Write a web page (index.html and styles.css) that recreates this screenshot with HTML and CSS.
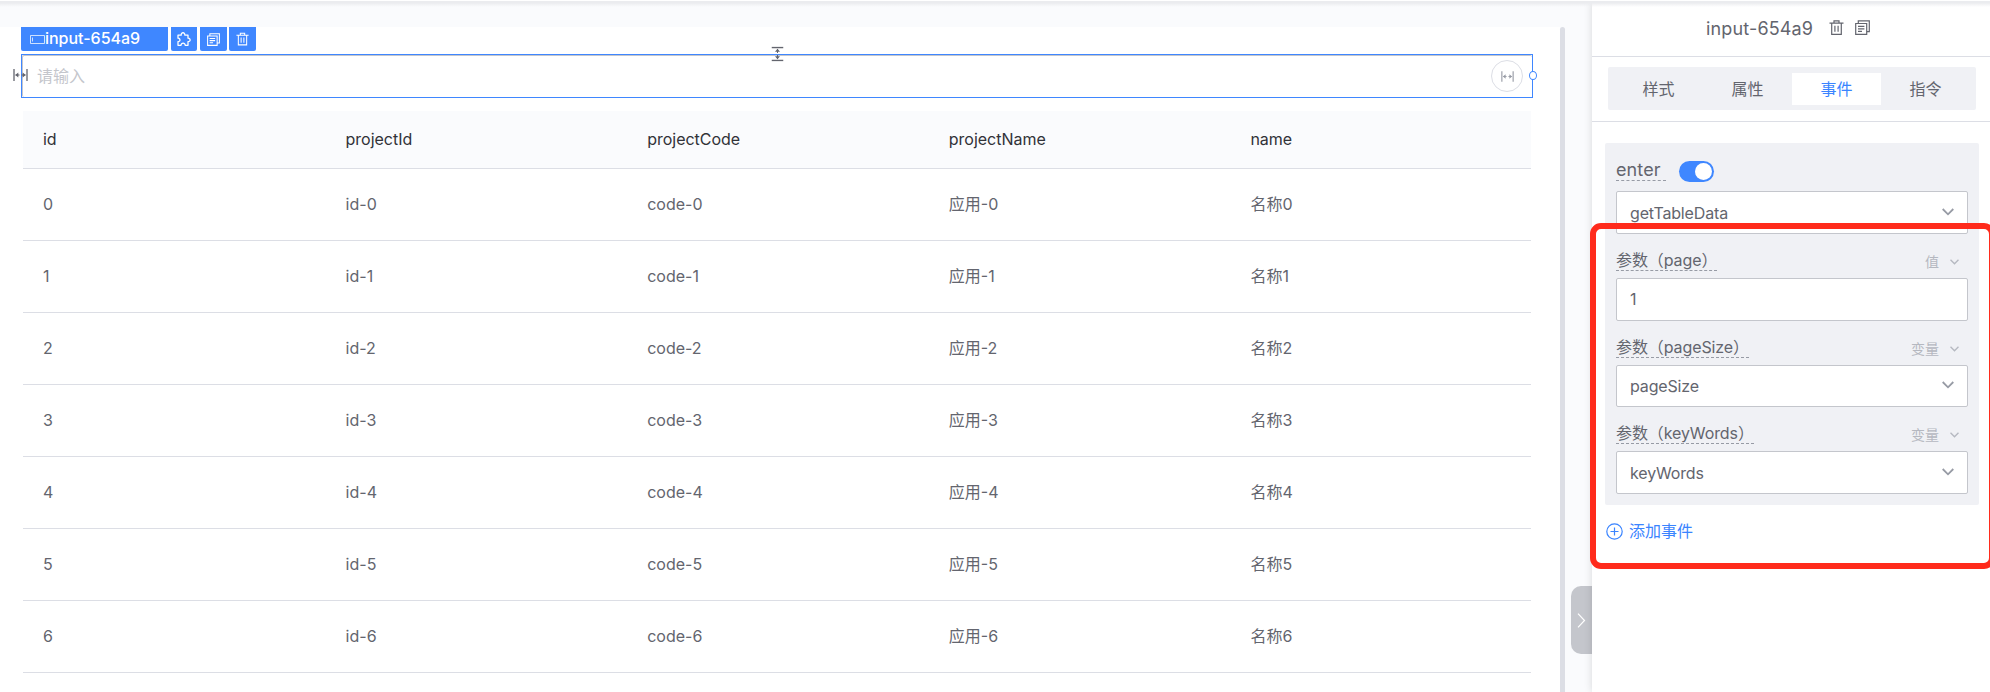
FILE: index.html
```html
<!DOCTYPE html>
<html lang="zh-CN">
<head>
<meta charset="utf-8">
<title>input-654a9</title>
<link rel="stylesheet" href="styles.css">
</head>
<body>
<svg class="defs" width="0" height="0">
  <symbol id="trash" viewBox="0 0 15 15"><path d="M.5 3.2h14M5 3V.9h5V3M2.700 3.400v10.900h9.600V3.400M5.900 5.700v6M9.100 5.700v6" fill="none" stroke="currentColor" stroke-width="1.200"/></symbol>
  <symbol id="copy" viewBox="0 0 15 15"><path d="M.7 3.500h11v10.800h-11zM3.300 3.300V.8h11v10.800h-2.400M3 6.300h6.400M3 8.800h6.400M3 11.300h4" fill="none" stroke="currentColor" stroke-width="1.200"/></symbol>
  <symbol id="puzzle" viewBox="0 0 14 14"><path d="M1 3.200h3.200c-.4-3.300 4-3.300 3.600 0h3.200v3c2.800-.2 2.800 3.600 0 3.400v3.700H8.200c.1-2.900-4.300-2.900-4.200 0H1V9.600c2.600.2 2.600-3.600 0-3.400z" fill="none" stroke="currentColor" stroke-width="1.300" stroke-linejoin="round"/></symbol>
  <symbol id="stretch" viewBox="0 0 15 12"><path d="M1 0v12M14 0v12" fill="none" stroke="currentColor" stroke-width="1.300"/><path d="M2.500 6h4M8.500 6h4" stroke="currentColor"/><path d="M2.300 6l3-2.500v5zM12.700 6l-3-2.500v5z" fill="currentColor"/></symbol>
  <symbol id="down" viewBox="0 0 12 8"><path d="M.7 1l5.300 5.300L11.300 1" fill="none" stroke="currentColor" stroke-width="1.800"/></symbol>
</svg>
<div class="app">
  <main class="stage">
    <div class="canvas">
      <div class="badges">
        <span class="badge badge-name"><svg width="15" height="9" viewBox="0 0 15 9"><path d="M.5.5h14v8H.5zM2.500 2.500v4" fill="none" stroke="currentColor" opacity=".75"/></svg>input-654a9</span>
        <span class="badge badge-puzzle"><svg width="14" height="14"><use href="#puzzle"/></svg></span>
        <span class="badge badge-copy"><svg width="13" height="13"><use href="#copy"/></svg></span>
        <span class="badge badge-trash"><svg width="13" height="14"><use href="#trash"/></svg></span>
      </div>
      <div class="selection">
        <div class="field">请输入</div>
        <svg class="grip-left" width="15" height="12"><use href="#stretch"/></svg>
        <svg class="grip-top" width="15" height="12"><use href="#stretch"/></svg>
        <span class="round"><svg width="13" height="11"><use href="#stretch"/></svg></span>
        <span class="handle"></span>
      </div>
      <div class="table">
        <div class="row head"><span>id</span><span>projectId</span><span>projectCode</span><span>projectName</span><span>name</span></div>
        <div class="row"><span>0</span><span>id-0</span><span>code-0</span><span>应用-0</span><span>名称0</span></div>
        <div class="row"><span>1</span><span>id-1</span><span>code-1</span><span>应用-1</span><span>名称1</span></div>
        <div class="row"><span>2</span><span>id-2</span><span>code-2</span><span>应用-2</span><span>名称2</span></div>
        <div class="row"><span>3</span><span>id-3</span><span>code-3</span><span>应用-3</span><span>名称3</span></div>
        <div class="row"><span>4</span><span>id-4</span><span>code-4</span><span>应用-4</span><span>名称4</span></div>
        <div class="row"><span>5</span><span>id-5</span><span>code-5</span><span>应用-5</span><span>名称5</span></div>
        <div class="row"><span>6</span><span>id-6</span><span>code-6</span><span>应用-6</span><span>名称6</span></div>
      </div>
    </div>
    <div class="scrollbar"></div>
    <div class="collapse"><svg width="9" height="15" viewBox="0 0 9 15"><path d="M1 .7l6.500 6.800L1 14.300" fill="none" stroke="currentColor" stroke-width="1.200"/></svg></div>
  </main>
  <aside class="panel">
    <header class="title"><span class="title-text">input-654a9</span><svg class="title-trash" width="15" height="15"><use href="#trash"/></svg><svg width="15" height="15"><use href="#copy"/></svg></header>
    <div class="tabs-wrap"><nav class="tabs"><span>样式</span><span>属性</span><span class="active">事件</span><span>指令</span></nav></div>
    <section class="events">
      <div class="event-head"><span class="label event-name">enter</span><span class="switch"></span></div>
      <div class="control">getTableData<svg width="12" height="8"><use href="#down"/></svg></div>
      <div class="param"><span class="label w-page">参数（page）</span><span class="kind">值<svg width="9" height="6"><use href="#down"/></svg></span></div>
      <div class="control raised">1</div>
      <div class="param"><span class="label w-size">参数（pageSize）</span><span class="kind">变量<svg width="9" height="6"><use href="#down"/></svg></span></div>
      <div class="control short raised">pageSize<svg width="12" height="8"><use href="#down"/></svg></div>
      <div class="param"><span class="label w-key">参数（keyWords）</span><span class="kind">变量<svg width="9" height="6"><use href="#down"/></svg></span></div>
      <div class="control">keyWords<svg width="12" height="8"><use href="#down"/></svg></div>
    </section>
    <div class="add"><svg width="17" height="17" viewBox="0 0 17 17"><path d="M8.500 4.500v8M4.500 8.500h8" stroke="currentColor" stroke-width="1.200"/><circle cx="8.500" cy="8.500" r="7.700" fill="none" stroke="currentColor" stroke-width="1.200"/></svg>添加事件</div>
    <div class="highlight"></div>
  </aside>
  <div class="topbar"></div>
</div>
</body>
</html>
```
FILE: styles.css
```css
* { box-sizing: border-box; }
body { margin: 0; font: 16px/20px Inter, "Noto Sans CJK SC", sans-serif; color: #63656e; }
svg { display: block; flex: none; }
.defs { position: absolute; }
.app { position: relative; width: 1990px; height: 692px; overflow: hidden; display: flex; background: #fafbfd; }
.topbar { position: absolute; inset: 0 0 auto; height: 7px; background: linear-gradient(#fff 1px, #ebecef 1px, #ebecef 3px, rgba(235,236,239,.7) 4px, rgba(250,251,253,0)); }
.stage { width: 1592px; padding-top: 27px; display: flex; }
.canvas { width: 1560px; background: #fff; padding-left: 21px; }
.scrollbar { width: 5px; background: #dcdee5; border-radius: 3px 3px 0 0; }
.collapse { width: 21px; height: 68px; margin: 559px 0 0 6px; border-radius: 10px 0 0 10px; background: #c4c6cc; color: #fff; display: flex; align-items: center; padding-left: 6px; }

.badges { display: flex; height: 24px; }
.badge { display: flex; align-items: center; justify-content: center; background: #3f87ff; color: #fff; border-radius: 0 0 2px 2px; }
.badge-name { width: 147px; justify-content: flex-start; padding: 0 0 2px 9px; font-weight: 500; letter-spacing: -.02px; }
.badge-name svg { margin-top: 3px; }
.badge-puzzle { width: 26px; margin-left: 3px; }
.badge-copy { width: 27px; margin-left: 3px; }
.badge-trash { width: 27px; margin-left: 2px; }

.selection { position: relative; width: 1512px; height: 44px; margin-top: 3px; border: 1px solid #3f87ff; }
.field { height: 42px; border: 1px solid #c4c6cc; border-width: 1px 0 0 1px; border-radius: 2px; padding: 10px 14px; color: #c4c6cc; }
.grip-left, .grip-top { position: absolute; color: #63656e; }
.grip-left { left: -9px; top: 14px; }
.grip-top { left: 748px; top: -7px; transform: rotate(90deg); }
.round { position: absolute; left: 1469px; top: 5px; width: 32px; height: 32px; border: 1px solid #dcdee5; border-radius: 50%; display: flex; align-items: center; justify-content: center; color: #979ba5; }
.handle { position: absolute; left: 1507px; top: 16px; width: 8px; height: 9px; border: 1px solid #3f87ff; border-radius: 50%; background: #fff; }

.table { width: 1508px; margin: 13px 0 0 2px; }
.row { display: grid; grid-template-columns: repeat(5, 1fr); height: 72px; border-bottom: 1px solid #dcdee5; align-items: center; padding-bottom: 2px; }
.row span { padding-left: 21px; }
.row span:first-child { padding-left: 20px; }
.head { height: 58px; background: #fafbfd; color: #313238; letter-spacing: -.02px; }

.panel { position: relative; width: 398px; background: #fff; box-shadow: 0 0 8px rgba(0,0,0,.14); }
.title { height: 57px; border-bottom: 1px solid #dcdee5; padding: 0 0 1px 114px; display: flex; align-items: center; font-size: 18px; }
.title-text { width: 123px; letter-spacing: .15px; padding-top: 2px; }
.title-trash { margin-right: 11px; }
.tabs-wrap { height: 65px; border-bottom: 1px solid #dcdee5; padding: 10px 14px 11px 16px; }
.tabs { height: 43px; background: #f0f1f5; border-radius: 2px; padding: 6px 6px 5px; display: flex; }
.tabs span { flex: 1; display: flex; align-items: center; justify-content: center; }
.tabs .active { background: #fff; color: #3a84ff; }

.events { width: 374px; height: 362px; margin: 21px 0 0 13px; background: #f0f1f5; border-radius: 2px; padding: 0 11px; display: flex; flex-direction: column; }
.event-head { height: 48px; padding-top: 15px; display: flex; align-items: flex-start; }
.label { height: 23px; line-height: 25px; border-bottom: 1px dashed #979ba5; white-space: nowrap; letter-spacing: -.1px; }
.event-name { width: 50px; font-size: 18px; line-height: 23px; letter-spacing: .1px; }
.switch { width: 35px; height: 21px; margin: 3px 0 0 13px; border-radius: 11px; background: #3f87ff; padding: 2px; display: flex; justify-content: flex-end; }
.switch::after { content: ""; width: 17px; height: 17px; border-radius: 50%; background: #fff; }
.control { height: 43px; border: 1px solid #c4c6cc; border-radius: 2px; background: #fff; padding: 1px 13px 0; display: flex; align-items: center; justify-content: space-between; color: #63656e; letter-spacing: -.15px; }
.control svg { color: #979ba5; margin-top: -2px; }
.short { height: 42px; }
.raised { padding: 0 13px 1px; }
.param { height: 44px; padding-top: 14px; display: flex; justify-content: space-between; align-items: flex-start; }
.w-page { width: 101px; }
.w-size { width: 133px; }
.w-key { width: 138px; }
.kind { display: flex; align-items: center; gap: 11px; font-size: 14px; color: #b5b8c0; padding: 4px 9px 0 0; }
.add { display: flex; align-items: center; gap: 6px; margin: 16px 0 0 14px; color: #3a84ff; }
.highlight { position: absolute; left: -2px; top: 223px; width: 405px; height: 346px; border: 6px solid #ff2b1c; border-radius: 11px; }
```
